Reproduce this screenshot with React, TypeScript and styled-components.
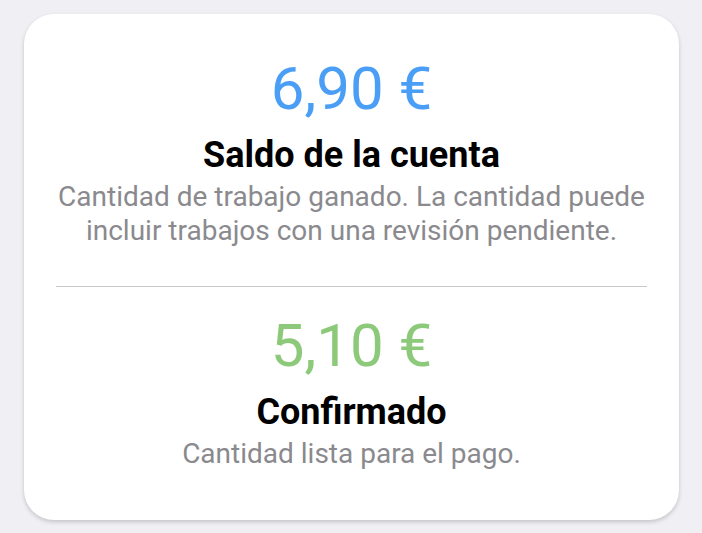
import styled, { createGlobalStyle } from "styled-components";

const GlobalStyle = createGlobalStyle`
  html, body {
    margin: 0;
    padding: 0;
    background: #efeff4;
    font-family: Roboto, "Liberation Sans", Arial, sans-serif;
  }
`;

const Page = styled.div`
  padding: 14px 23px 13px 24px;
`;

const Card = styled.div`
  background: #fff;
  border-radius: 30px;
  box-shadow: 0 2px 4px rgba(0, 0, 0, 0.18);
  padding: 0 32px;
  height: 506px;
  box-sizing: border-box;
  display: flex;
  flex-direction: column;
`;

const Section = styled.section<{ $top: number; $bottom: number }>`
  display: flex;
  flex-direction: column;
  align-items: center;
  text-align: center;
  padding-top: ${(p) => p.$top}px;
  padding-bottom: ${(p) => p.$bottom}px;
`;

const Amount = styled.div<{ $color: string }>`
  color: ${(p) => p.$color};
  font-size: 60px;
  font-weight: 400;
  line-height: 70px;
`;

const Title = styled.h2`
  margin: 11px 0 0;
  color: #000;
  font-size: 36px;
  font-weight: 700;
  line-height: 40px;
`;

const Description = styled.p`
  margin: 5px 0 0;
  color: #8a8a8e;
  font-size: 28px;
  line-height: 34px;
`;

const Divider = styled.hr`
  border: 0;
  border-top: 1px solid #c8c8cc;
  margin: 0;
  width: 100%;
`;

export default function App() {
  return (
    <>
      <GlobalStyle />
      <Page>
        <Card>
          <Section $top={40} $bottom={38}>
            <Amount $color="#4a9ef5">6,90 €</Amount>
            <Title>Saldo de la cuenta</Title>
            <Description>
              Cantidad de trabajo ganado. La cantidad puede incluir trabajos con una revisión pendiente.
            </Description>
          </Section>
          <Divider />
          <Section $top={24} $bottom={0}>
            <Amount $color="#8dc97a">5,10 €</Amount>
            <Title>Confirmado</Title>
            <Description>Cantidad lista para el pago.</Description>
          </Section>
        </Card>
      </Page>
    </>
  );
}
